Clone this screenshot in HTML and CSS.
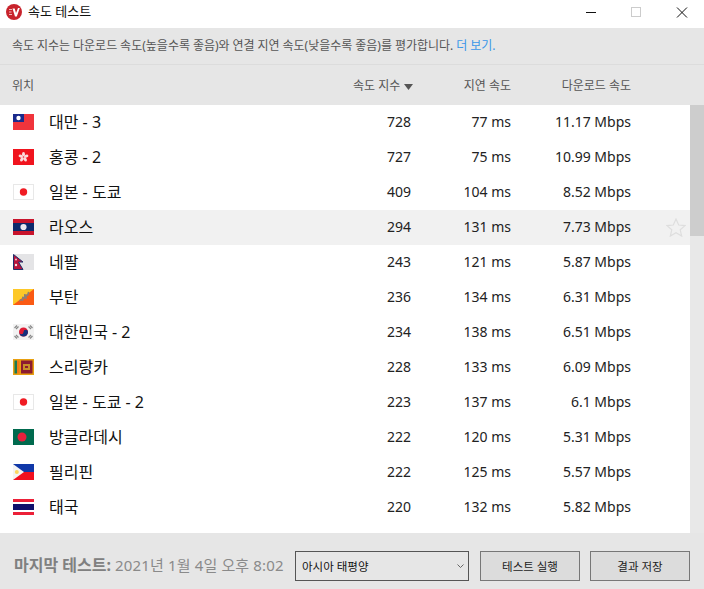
FILE: index.html
```html
<!DOCTYPE html>
<html lang="ko">
<head>
    <meta charset="UTF-8">
    <title>속도 테스트</title>
    <link rel="stylesheet" href="styles.css">
</head>
<body>
    <div class="window">
        <div class="titlebar">
            <svg class="logo" width="16" height="16" viewBox="0 0 16 16">
                <circle cx="8" cy="8" r="8" fill="#c8232c"/>
                <path d="M3 5.500h3M3 8h2.500M3 10.500h3" stroke="#f0b8b8" stroke-width="1.100"/>
                <path d="M6.500 4.500h2.200L10 9l2-5h1.800L10.800 12.500H9z" fill="#fff"/>
            </svg>
            <span class="title">속도 테스트</span>
            <div class="controls">
                <svg width="46" height="25" viewBox="0 0 46 25"><path d="M20 12.500h10" stroke="#111"/></svg>
                <svg width="46" height="25" viewBox="0 0 46 25"><rect x="19.500" y="7.500" width="9" height="9" fill="none" stroke="#ccc"/></svg>
                <svg width="46" height="25" viewBox="0 0 46 25"><path d="M19 7.500l10 10M29 7.500l-10 10" stroke="#111"/></svg>
            </div>
        </div>

        <div class="notice">속도 지수는 다운로드 속도(높을수록 좋음)와 연결 지연 속도(낮을수록 좋음)를 평가합니다. <a class="more">더 보기</a><span class="more">.</span></div>

        <div class="head">
            <span class="col-name">위치</span>
            <span class="col-score">속도 지수 <svg class="sort" width="9" height="6" viewBox="0 0 9 6"><path d="M0 0h9L4.500 6z" fill="#555"/></svg></span>
            <span class="col-ping">지연 속도</span>
            <span class="col-down">다운로드 속도</span>
        </div>

        <div class="body">
            <div class="list">
                <div class="row">
                    <svg class="flag" viewBox="0 0 21 16"><rect width="21" height="16" fill="#f0343c"/><rect width="11" height="8" fill="#1a2a8c"/><circle cx="5.500" cy="4" r="2.200" fill="#fff"/></svg>
                    <span class="col-name">대만 - 3</span><span class="col-score">728</span><span class="col-ping">77 ms</span><span class="col-down">11.17 Mbps</span>
                </div>
                <div class="row">
                    <svg class="flag" viewBox="0 0 21 16"><rect width="21" height="16" fill="#f0141e"/><g fill="#fbdcdc"><ellipse cx="10.500" cy="5.200" rx="1.500" ry="2.300"/><ellipse cx="10.500" cy="5.200" rx="1.500" ry="2.300" transform="rotate(72 10.500 8)"/><ellipse cx="10.500" cy="5.200" rx="1.500" ry="2.300" transform="rotate(144 10.500 8)"/><ellipse cx="10.500" cy="5.200" rx="1.500" ry="2.300" transform="rotate(216 10.500 8)"/><ellipse cx="10.500" cy="5.200" rx="1.500" ry="2.300" transform="rotate(288 10.500 8)"/></g><circle cx="10.500" cy="8" r=".8" fill="#f0606a"/></svg>
                    <span class="col-name">홍콩 - 2</span><span class="col-score">727</span><span class="col-ping">75 ms</span><span class="col-down">10.99 Mbps</span>
                </div>
                <div class="row">
                    <svg class="flag" viewBox="0 0 21 16"><rect x=".5" y=".5" width="20" height="15" fill="#fff" stroke="#e8e8e8"/><circle cx="10.500" cy="8" r="3.700" fill="#f01c24"/></svg>
                    <span class="col-name">일본 - 도쿄</span><span class="col-score">409</span><span class="col-ping">104 ms</span><span class="col-down">8.52 Mbps</span>
                </div>
                <div class="row row-hover">
                    <svg class="flag" viewBox="0 0 21 16"><rect width="21" height="16" fill="#c8142c"/><rect y="4" width="21" height="8" fill="#0c2a6c"/><circle cx="10.500" cy="8" r="3.100" fill="#e8e8f0"/></svg>
                    <span class="col-name">라오스</span><span class="col-score">294</span><span class="col-ping">131 ms</span><span class="col-down">7.73 Mbps</span>
                    <svg class="star" width="20" height="19" viewBox="0 0 20 19"><path d="M10 1l2.700 6 6.300.6-4.800 4.200 1.500 6.300L10 14.800l-5.700 3.300 1.500-6.300L1 7.600 7.300 7z" fill="none" stroke="#dedede" stroke-width="1.200"/></svg>
                </div>
                <div class="row">
                    <svg class="flag" viewBox="0 0 21 16"><rect width="21" height="16" fill="#e4e4e6"/><path d="M.5 .5L10 8H5.500L10 15.500H.5z" fill="#b8143c" stroke="#20306c"/><circle cx="3" cy="11" r="1.200" fill="#f4e0e0"/><circle cx="3" cy="5.500" r=".9" fill="#f4e0e0"/></svg>
                    <span class="col-name">네팔</span><span class="col-score">243</span><span class="col-ping">121 ms</span><span class="col-down">5.87 Mbps</span>
                </div>
                <div class="row">
                    <svg class="flag" viewBox="0 0 21 16"><rect width="21" height="16" fill="#fdc828"/><path d="M21 0v16H0z" fill="#fa5a14"/><path d="M6 13l1-3 2 .5 0-3 2 .5 0-3 3 .5 1-3 1.500 1-1 3-2 1 .5 2.500-3-.5-1 2.500-2-.5z" fill="#8a8078"/></svg>
                    <span class="col-name">부탄</span><span class="col-score">236</span><span class="col-ping">134 ms</span><span class="col-down">6.31 Mbps</span>
                </div>
                <div class="row">
                    <svg class="flag" viewBox="0 0 21 16"><rect width="21" height="16" fill="#f2f2f2"/><circle cx="10.500" cy="8" r="4.500" fill="#e01c34"/><path d="M6 8a2.250 2.250 0 0 0 4.500 0 2.250 2.250 0 0 1 4.500 0 4.500 4.500 0 0 1-9 0z" fill="#14307c"/><path d="M1.500 4l2.500-2.500M3 5l2.500-2.500M15.500 2.500L18 5M17 1.500L19.500 4M1.500 12L4 14.500M3 11l2.500 2.500M15.500 13.500L18 11M17 14.500l2.500-2.500" stroke="#888" stroke-width="1.200"/></svg>
                    <span class="col-name">대한민국 - 2</span><span class="col-score">234</span><span class="col-ping">138 ms</span><span class="col-down">6.51 Mbps</span>
                </div>
                <div class="row">
                    <svg class="flag" viewBox="0 0 21 16"><rect width="21" height="16" fill="#e8a010"/><rect x="1.500" y="1.500" width="2.500" height="13" fill="#1a7a50"/><rect x="4" y="1.500" width="2.500" height="13" fill="#f07818"/><rect x="8" y="1.500" width="11.500" height="13" fill="#8c1c30"/><path d="M10 5h7v6h-7z" fill="#c89028"/><rect x="12" y="7" width="3" height="2" fill="#8c1c30"/></svg>
                    <span class="col-name">스리랑카</span><span class="col-score">228</span><span class="col-ping">133 ms</span><span class="col-down">6.09 Mbps</span>
                </div>
                <div class="row">
                    <svg class="flag" viewBox="0 0 21 16"><rect x=".5" y=".5" width="20" height="15" fill="#fff" stroke="#e8e8e8"/><circle cx="10.500" cy="8" r="3.700" fill="#f01c24"/></svg>
                    <span class="col-name">일본 - 도쿄 - 2</span><span class="col-score">223</span><span class="col-ping">137 ms</span><span class="col-down">6.1 Mbps</span>
                </div>
                <div class="row">
                    <svg class="flag" viewBox="0 0 21 16"><rect width="21" height="16" fill="#006a4e"/><circle cx="9" cy="8" r="4.500" fill="#e8203c"/></svg>
                    <span class="col-name">방글라데시</span><span class="col-score">222</span><span class="col-ping">120 ms</span><span class="col-down">5.31 Mbps</span>
                </div>
                <div class="row">
                    <svg class="flag" viewBox="0 0 21 16"><rect width="21" height="8" fill="#1038a8"/><rect y="8" width="21" height="8" fill="#f01020"/><path d="M0 0l11 8L0 16z" fill="#f4f4f4"/><circle cx="3.800" cy="8" r="2" fill="#fcd860"/></svg>
                    <span class="col-name">필리핀</span><span class="col-score">222</span><span class="col-ping">125 ms</span><span class="col-down">5.57 Mbps</span>
                </div>
                <div class="row">
                    <svg class="flag" viewBox="0 0 21 16"><rect width="21" height="16" fill="#fff"/><rect width="21" height="3" fill="#ec2038"/><rect width="21" height="3" y="13" fill="#ec2038"/><rect y="5" width="21" height="6" fill="#10106c"/></svg>
                    <span class="col-name">태국</span><span class="col-score">220</span><span class="col-ping">132 ms</span><span class="col-down">5.82 Mbps</span>
                </div>
            </div>
            <div class="scrollbar"><div class="thumb"></div></div>
        </div>

        <div class="footer">
            <span class="last"><b>마지막 테스트:</b> 2021년 1월 4일 오후 8:02</span>
            <div class="select">
                <span>아시아 태평양</span>
                <svg width="7" height="5" viewBox="0 0 7 5"><path d="M.5 .5l3 3 3-3" fill="none" stroke="#666"/></svg>
            </div>
            <div class="btn btn-run">테스트 실행</div>
            <div class="btn">결과 저장</div>
        </div>
    </div>
</body>
</html>
```
FILE: styles.css
```css
* {
    box-sizing: border-box;
    margin: 0;
    padding: 0;
}
html, body {
    height: 100%;
}
body {
    background: #fff;
    font-family: "Noto Sans", "Noto Sans CJK KR", sans-serif;
    color: #222;
    overflow: hidden;
}
.window {
    display: flex;
    flex-direction: column;
    width: 704px;
    height: 589px;
}

/* title bar */
.titlebar {
    display: flex;
    align-items: flex-start;
    height: 28px;
    padding: 4px 0 0 6px;
    background: #fff;
}
.logo {
    margin-right: 6px;
}
.title {
    font-size: 13px;
    line-height: 15px;
    color: #111;
}
.controls {
    display: flex;
    margin: -4px 0 0 auto;
}

/* grey top band */
.notice {
    height: 37px;
    padding: 9px 12px 0;
    background: #e6e6e6;
    border-bottom: 1px solid #dcdcdc;
    font-size: 12px;
    line-height: 17px;
    word-spacing: -.2px;
    color: #555;
}
.more {
    color: #3a96e8;
}
.head {
    display: flex;
    align-items: center;
    height: 40px;
    padding: 0 73px 0 12px;
    background: #e6e6e6;
    font-size: 12px;
    color: #555;
}
.head .col-name {
    flex: 1;
}
.sort {
    margin-left: 1px;
}
.head .col-score {
    width: 80px;
    text-align: left;
}
.head .col-ping {
    width: 78px;
    text-align: right;
}
.head .col-down {
    width: 120px;
    text-align: right;
}

/* table */
.body {
    display: flex;
    flex: 1;
    min-height: 0;
}
.list {
    flex: 1;
    background: #fff;
}
.row {
    display: flex;
    align-items: center;
    height: 35px;
    padding: 0 59px 1px 13px;
    font-size: 14px;
    line-height: 20px;
    color: #222;
    position: relative;
}
.row-hover {
    background: #f1f1f1;
}
.flag {
    width: 21px;
    height: 16px;
    margin-right: 15px;
    flex: none;
}
.row .col-name {
    flex: 1;
    font-size: 16px;
    color: #111;
}
.row .col-score {
    width: 60px;
    text-align: right;
}
.row .col-ping {
    width: 100px;
    text-align: right;
}
.row .col-down {
    width: 120px;
    text-align: right;
}
.star {
    position: absolute;
    right: 4px;
    top: 8px;
}
.scrollbar {
    width: 14px;
    background: #e8e8e8;
}
.thumb {
    height: 131px;
    background: #cdcdcd;
}

/* footer */
.footer {
    display: flex;
    align-items: center;
    height: 56px;
    padding: 18px 14px 8px 14px;
    background: #e6e6e6;
}
.last {
    width: 281px;
    padding-bottom: 4px;
    font-size: 15px;
    letter-spacing: .15px;
    color: #8a8a8a;
    white-space: nowrap;
}
.last b {
    font-size: 16px;
    font-weight: 700;
    letter-spacing: 0;
    color: #808080;
}
.select {
    display: flex;
    align-items: center;
    justify-content: space-between;
    width: 174px;
    height: 30px;
    padding: 0 4px 0 6px;
    border: 1px solid #555;
    font-size: 11.500px;
    color: #111;
}
.btn {
    display: flex;
    align-items: center;
    justify-content: center;
    width: 100px;
    height: 30px;
    margin-left: 10px;
    background: #dcdcdc;
    border: 1px solid #777;
    font-size: 11.500px;
    color: #222;
}
.btn-run {
    margin-left: 11px;
}
```
